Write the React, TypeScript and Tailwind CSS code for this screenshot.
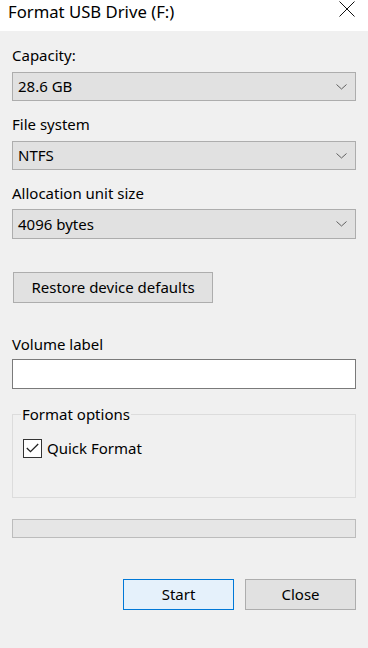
import React from 'react';

const font = { fontFamily: '"Noto Sans", "Open Sans", sans-serif' };

function Chevron() {
  return (
    <svg width="11" height="6" viewBox="0 0 11 6" className="shrink-0">
      <path d="M0.5 0.5 L5.5 5 L10.5 0.5" fill="none" stroke="#5f5f5f" strokeWidth="1" />
    </svg>
  );
}

function Combo({ value, className = 'h-[29px]' }: { value: string; className?: string }) {
  return (
    <div
      className={`${className} flex items-center justify-between border border-[#adadad] bg-[#e1e1e1] pl-[5px] pr-[8px] text-[15px] text-black`}
    >
      <span>{value}</span>
      <Chevron />
    </div>
  );
}

function Label({ text, className }: { text: string; className: string }) {
  return <div className={`${className} h-[20px] text-[15px] leading-[20px] text-black`}>{text}</div>;
}

export default function App() {
  return (
    <div className="flex h-[648px] w-[368px] flex-col overflow-hidden bg-[#f0f0f0]" style={font}>
      {/* Title bar */}
      <div className="flex h-[31px] shrink-0 items-start justify-between bg-white pl-[8px] pr-[13px]">
        <span className="pt-[1px] text-[16.7px] leading-[22px] text-black">Format USB Drive (F:)</span>
        <svg width="16" height="16" viewBox="0 0 16 16" className="mt-[1px]">
          <path d="M0.5 0.5 L15.5 15.5 M15.5 0.5 L0.5 15.5" stroke="#111" strokeWidth="1" />
        </svg>
      </div>

      {/* Body */}
      <div className="flex flex-col px-[12px]">
        <Label text="Capacity:" className="mt-[14px]" />
        <Combo value="28.6 GB" className="mt-[7px] h-[29px]" />

        <Label text="File system" className="mt-[13px]" />
        <Combo value="NTFS" className="mt-[7px] h-[29px]" />

        <Label text="Allocation unit size" className="mt-[13px]" />
        <Combo value="4096 bytes" className="mt-[6px] h-[30px]" />

        <button className="ml-[1px] mt-[33px] h-[31px] w-[200px] border border-[#adadad] bg-[#e1e1e1] text-[15px] text-black">
          Restore device defaults
        </button>

        <Label text="Volume label" className="mt-[31px]" />
        <div className="mt-[5px] h-[30px] border border-[#7a7a7a] bg-white" />

        {/* Format options group */}
        <div className="relative mt-[25px] h-[84px] border border-[#dcdcdc]">
          <span className="absolute left-[8px] top-[-11px] bg-[#f0f0f0] px-[1px] text-[15px] leading-[20px] text-black">
            Format options
          </span>
          <label className="ml-[10px] mt-[23px] flex items-center gap-[5px] text-[15px] leading-[20px] text-black">
            <span className="flex h-[19px] w-[19px] items-center justify-center border border-[#333333] bg-white">
              <svg width="13" height="10" viewBox="0 0 13 10">
                <path d="M0.8 5 L4.5 8.7 L12.2 1" fill="none" stroke="#222" strokeWidth="1.3" />
              </svg>
            </span>
            Quick Format
          </label>
        </div>

        {/* Progress bar */}
        <div className="mt-[21px] h-[19px] border border-[#bcbcbc] bg-[#e6e6e6]" />

        {/* Buttons */}
        <div className="mt-[41px] flex justify-end gap-[11px]">
          <button className="h-[31px] w-[111px] border border-[#0078d7] bg-[#e5f1fb] text-[15px] text-black">
            Start
          </button>
          <button className="h-[31px] w-[111px] border border-[#adadad] bg-[#e1e1e1] text-[15px] text-black">
            Close
          </button>
        </div>
      </div>
    </div>
  );
}
